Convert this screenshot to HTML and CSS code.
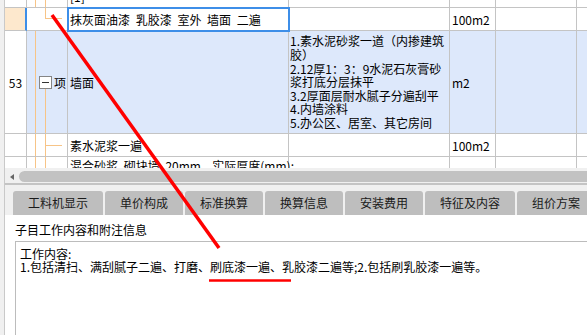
FILE: index.html
```html
<!DOCTYPE html>
<html lang="zh-CN">

<head>
    <meta charset="UTF-8">
    <title>清单定额</title>
    <link rel="stylesheet" href="styles.css">
</head>

<body>
    <div class="window">
        <!-- 清单表格 (已滚动) -->
        <div class="grid">
            <div class="grid-body">
                <div class="row">
                    <div class="cell c-no"></div>
                    <div class="cell c-tree tree-pass"></div>
                    <div class="cell c-name">[1]</div>
                    <div class="cell c-desc"></div>
                    <div class="cell c-unit"></div>
                    <div class="cell c-qty"></div>
                    <div class="cell c-more"></div>
                </div>
                <div class="row">
                    <div class="cell c-no current"></div>
                    <div class="cell c-tree tree-last"></div>
                    <div class="cell c-name selected">抹灰面油漆 乳胶漆 室外 墙面 二遍</div>
                    <div class="cell c-desc"></div>
                    <div class="cell c-unit">100m2</div>
                    <div class="cell c-qty"></div>
                    <div class="cell c-more"></div>
                </div>
                <div class="row row-tall row-item">
                    <div class="cell c-no">53</div>
                    <div class="cell c-tree tree-open">
                        <span class="toggle"></span><span>项</span>
                    </div>
                    <div class="cell c-name">墙面</div>
                    <div class="cell c-desc desc-list">
                        <div class="line">1.素水泥砂浆一道（内掺建筑</div>
                        <div class="line">胶）</div>
                        <div class="line">2.12厚1：3：9水泥石灰膏砂</div>
                        <div class="line">浆打底分层抹平</div>
                        <div class="line">3.2厚面层耐水腻子分遍刮平</div>
                        <div class="line">4.内墙涂料</div>
                        <div class="line">5.办公区、居室、其它房间</div>
                    </div>
                    <div class="cell c-unit">m2</div>
                    <div class="cell c-qty"></div>
                    <div class="cell c-more"></div>
                </div>
                <div class="row">
                    <div class="cell c-no"></div>
                    <div class="cell c-tree tree-child"></div>
                    <div class="cell c-name">素水泥浆一遍</div>
                    <div class="cell c-desc"></div>
                    <div class="cell c-unit">100m2</div>
                    <div class="cell c-qty"></div>
                    <div class="cell c-more"></div>
                </div>
                <div class="row row-top">
                    <div class="cell c-no"></div>
                    <div class="cell c-tree tree-pass"></div>
                    <div class="cell c-name">混合砂浆 砌块墙 20mm &nbsp;实际厚度(mm):</div>
                    <div class="cell c-desc"></div>
                    <div class="cell c-unit"></div>
                    <div class="cell c-qty"></div>
                    <div class="cell c-more"></div>
                </div>
            </div>
        </div>

        <div class="hscroll">
            <span class="scroll-arrow"></span>
            <span class="scroll-thumb"></span>
        </div>
        <div class="splitter"></div>

        <!-- 底部页签 -->
        <div class="tabs">
            <div class="tab">工料机显示</div>
            <div class="tab">单价构成</div>
            <div class="tab">标准换算</div>
            <div class="tab">换算信息</div>
            <div class="tab">安装费用</div>
            <div class="tab">特征及内容</div>
            <div class="tab">组价方案</div>
        </div>

        <div class="panel">
            <div class="panel-title">子目工作内容和附注信息</div>
            <div class="memo">
                <div class="line">工作内容:</div>
                <div class="line">1.包括清扫、满刮腻子二遍、打磨、刷底漆一遍、乳胶漆二遍等;2.包括刷乳胶漆一遍等。</div>
            </div>
        </div>
    </div>

    <!-- 红色批注 -->
    <svg class="markup" width="587" height="335" viewBox="0 0 587 335">
        <line x1="52" y1="15" x2="219" y2="248" stroke="#f00" stroke-width="3.5" />
        <line x1="209" y1="280.5" x2="291" y2="280.5" stroke="#f00" stroke-width="2.5" />
    </svg>
</body>

</html>
```

FILE: styles.css
```css
* {
    box-sizing: border-box;
    margin: 0;
    padding: 0;
}

body {
    position: relative;
    width: 587px;
    height: 335px;
    overflow: hidden;
    padding-left: 4px;
    background: #f0f0f0;
    font-family: "Noto Sans CJK SC", "Liberation Sans", sans-serif;
    font-size: 12px;
    color: #000;
}

.window {
    display: flex;
    flex-direction: column;
    height: 100%;
    overflow: hidden;
    border-left: 1px solid #c9c9c9;
    background: #fff;
}

/* Grid */
.grid {
    flex: none;
    height: 168px;
    overflow: hidden;
}

.grid-body {
    margin-top: -15px;
}

.row {
    display: flex;
    height: 23px;
}

.row-tall {
    height: 103px;
}

.row-top .cell {
    align-items: flex-start;
    padding-top: 2px;
    line-height: 14px;
}

.cell {
    flex: none;
    display: flex;
    align-items: center;
    white-space: nowrap;
    border-right: 1px solid #c4c4c4;
    border-bottom: 1px solid #c4c4c4;
    word-spacing: 3px;
}

.c-no {
    width: 22px;
    justify-content: center;
}

.c-tree {
    width: 41px;
}

.c-name {
    width: 221px;
    padding-left: 2px;
}

.c-desc {
    width: 161px;
    padding-left: 1px;
}

.c-unit {
    width: 46px;
    padding-left: 2px;
}

.c-qty {
    width: 81px;
}

.c-more {
    flex: 1;
    border-right: none;
}

.row-item .cell {
    background: #dde8fb;
}

.row-item .c-no {
    background: #fff;
}

.current {
    background: #fde8cd;
    border-right: 2px solid #3d8ee8;
}

.selected {
    outline: 2px solid #3d8ee8;
    outline-offset: -1px;
    position: relative;
    z-index: 1;
}

.desc-list {
    flex-direction: column;
    align-items: flex-start;
    justify-content: center;
    word-spacing: 0;
}

.desc-list .line {
    height: 13.67px;
    line-height: 13.67px;
}

/* Tree lines */
.tree-pass {
    background:
        linear-gradient(#f7c487, #f7c487) 8px 0 / 1px 100% no-repeat,
        linear-gradient(#f7c487, #f7c487) 18px 0 / 1px 100% no-repeat;
}

.tree-last {
    background:
        linear-gradient(#f7c487, #f7c487) 18px 0 / 1px 11px no-repeat,
        linear-gradient(#f7c487, #f7c487) 18px 10px / 17px 1px no-repeat;
}

.tree-child {
    background:
        linear-gradient(#f7c487, #f7c487) 8px 0 / 1px 100% no-repeat,
        linear-gradient(#f7c487, #f7c487) 18px 0 / 1px 100% no-repeat,
        linear-gradient(#f7c487, #f7c487) 18px 11px / 17px 1px no-repeat;
}

.row-item .tree-open {
    padding-left: 12px;
    gap: 2px;
    background:
        linear-gradient(#f7c487, #f7c487) 8px 0 / 1px 100% no-repeat,
        linear-gradient(#f7c487, #f7c487) 18px 57px / 1px 100% no-repeat,
        #dde8fb;
}

.toggle {
    position: relative;
    width: 13px;
    height: 13px;
    border: 1px solid #858585;
    background: #fff;
}

.toggle::after {
    content: "";
    position: absolute;
    left: 2px;
    right: 2px;
    top: 5px;
    height: 1px;
    background: #333;
}

/* Scrollbar + splitter */
.hscroll {
    flex: none;
    display: flex;
    align-items: center;
    height: 15px;
    padding: 3px 0 1px 5px;
    background: #f0f0f0;
}

.scroll-arrow {
    width: 0;
    height: 0;
    border-top: 3px solid transparent;
    border-bottom: 3px solid transparent;
    border-right: 4px solid #666;
}

.scroll-thumb {
    flex: 1;
    height: 11px;
    margin-left: 5px;
    border-radius: 6px 0 0 6px;
    background: #c2c2c2;
}

.splitter {
    flex: none;
    height: 2px;
    background: #c4c4c4;
}

/* Tabs */
.tabs {
    flex: none;
    display: flex;
    gap: 2px;
    padding: 6px 0 0 8px;
    background: #f0f0f0;
    overflow: hidden;
}

.tab {
    flex: none;
    height: 24px;
    line-height: 24px;
    padding: 0 15px;
    border-radius: 3px 3px 0 0;
    background: #bebebe;
    color: #1a1a1a;
}

/* Panel */
.panel {
    flex: 1;
    display: flex;
    flex-direction: column;
    min-height: 0;
    overflow: hidden;
    background: #fff;
}

.panel-title {
    flex: none;
    padding: 7px 0 3px 10px;
    line-height: 16px;
}

.memo {
    flex: 1;
    margin: 0 -20px -20px 10px;
    padding: 5px 0 0 4px;
    border: 1px solid #bcbcbc;
}

.memo .line {
    height: 13px;
    line-height: 13px;
    white-space: nowrap;
}

.markup {
    position: absolute;
    left: 0;
    top: 0;
    pointer-events: none;
}
```
